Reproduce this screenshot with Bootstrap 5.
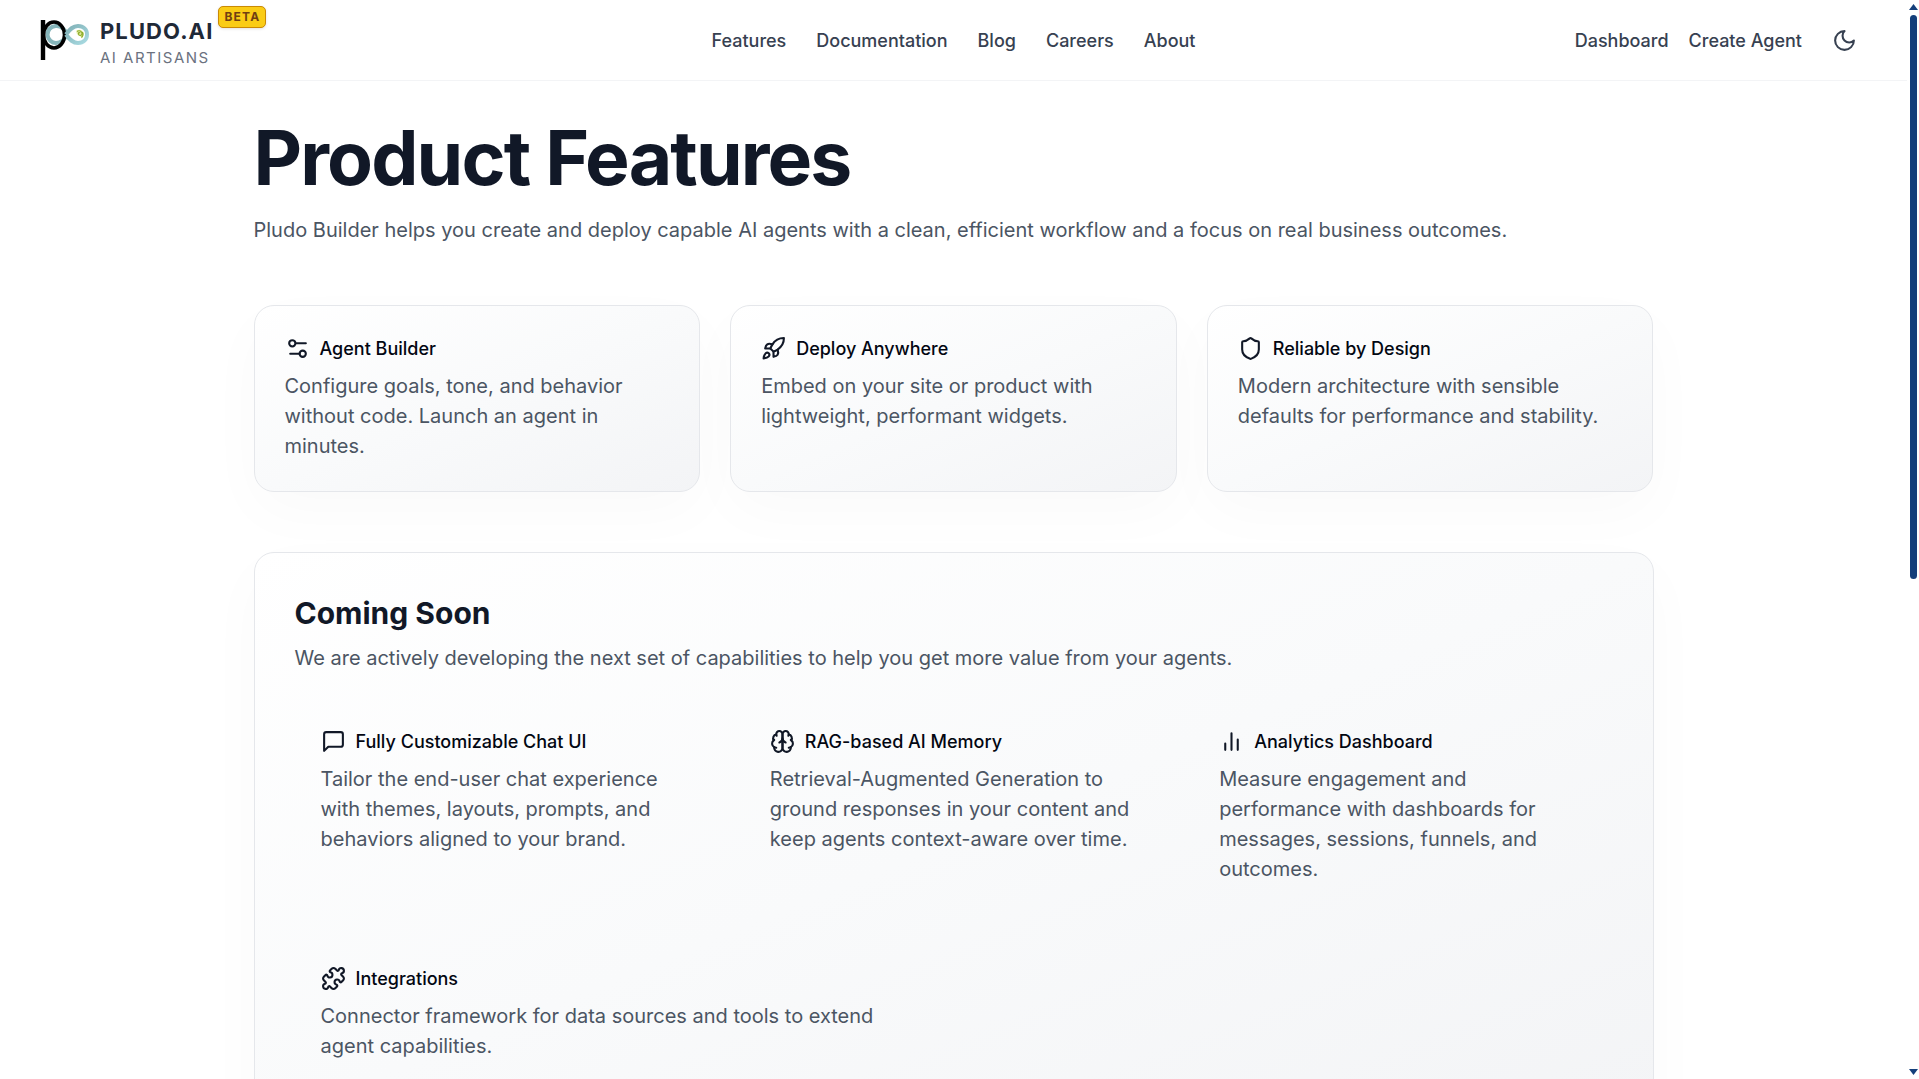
<!DOCTYPE html>
<html lang="en">
<head>
<meta charset="utf-8">
<meta name="viewport" content="width=device-width, initial-scale=1">
<title>Product Features – Pludo.AI</title>
<link href="https://cdn.jsdelivr.net/npm/bootstrap@5.3.0/dist/css/bootstrap.min.css" rel="stylesheet">
<style>
  body { font-family: Inter, "Liberation Sans", sans-serif; font-size: 20px; line-height: 30px; color: #4b5563; background: #fff; }
  .pane { min-width: 0; }
  .topbar { height: 81px; padding: 0 40px; border-bottom: 1px solid #f3f4f6; }
  .side { flex: 1 1 0; }
  .topbar a { text-decoration: none; }
  .menu { gap: 30px; }
  .actions { gap: 20px; }
  .menu a, .actions a { padding-top: 2px; font-size: 18px; font-weight: 500; color: #374151; }
  .moon { width: 45px; height: 45px; color: #374151; }
  .logo { width: 50px; height: 50px; }
  .brand { gap: 10px; position: relative; }
  .wordmark { font-size: 22px; line-height: 28px; font-weight: 700; letter-spacing: .05em; color: #1f2937; }
  .tagline { font-size: 15px; line-height: 25px; letter-spacing: .1em; color: #6b7280; }
  .brand-text { padding-top: 6px; }
  .beta { position: absolute; left: 100%; top: -5px; margin-left: 5px; padding: 0 5px; border: 1px solid #ca8a04; border-radius: 5px; background: #facc15; color: #713f12; font-size: 12px; line-height: 20px; font-weight: 700; letter-spacing: .1em; box-shadow: 0 1px 3px rgba(0,0,0,.12); }
  .wrap { max-width: 1400px; padding-top: 39px; }
  h1 { font-size: 75px; line-height: 75px; font-weight: 700; letter-spacing: -.025em; color: #111827; margin-bottom: 20px; }
  h2 { font-size: 30px; line-height: 40px; font-weight: 700; color: #111827; margin-bottom: 10px; }
  h3 { font-size: 18px; line-height: 25px; font-weight: 500; color: #030712; margin: 0; }
  .intro { margin-bottom: 60px; }
  .coming-text { margin-bottom: 30px; }
  .tiles { display: grid; grid-template-columns: repeat(3, minmax(0, 1fr)); gap: 30px; }
  .surface { border: 1px solid #e5e7eb; border-radius: 20px; background: linear-gradient(to bottom right, #fff, #f9fafb 50%, #f3f4f6); box-shadow: 0 20px 60px rgba(0,0,0,.025); }
  .tile { padding: 30px; }
  .panel { padding: 40px; margin: 60px 0; }
  .upcoming { padding: 26px; }
  .upcoming.wide { grid-column: span 2; max-width: 650px; }
  .head { gap: 10px; margin-bottom: 10px; }
  .ico { width: 25px; height: 25px; flex: none; fill: none; stroke: currentColor; stroke-width: 2; stroke-linecap: round; stroke-linejoin: round; }
  .head .ico { color: #111827; }
  .rail { width: 12px; padding: 4px 0; flex: none; }
  .thumb { width: 7px; height: 52.7%; margin-top: 5px; border-radius: 4px; background: #143f7b; }
  .rail svg { width: 9px; height: 6px; fill: #143f7b; }
</style>
<script src="https://cdn.jsdelivr.net/npm/bootstrap@5.3.0/dist/js/bootstrap.bundle.min.js"></script>
</head>
<body>
<div class="d-flex vh-100 overflow-hidden">
  <div class="pane flex-grow-1 overflow-hidden">
    <header class="topbar d-flex align-items-center">
      <div class="side d-flex">
        <a href="#" class="brand d-flex align-items-center">
          <svg class="logo" viewBox="0 0 50 50" aria-hidden="true">
            <defs><linearGradient id="lg" x1="0" y1="0" x2="1" y2="1"><stop offset="0" stop-color="#7fb0b6"/><stop offset="1" stop-color="#a9dbe2"/></linearGradient></defs>
            <path d="M27 19.500C24 12 20 10.500 15.500 11C9.500 12 7.500 16 7.500 20C8 25 12 28 16 28C22 28 25 24 27 19.500" fill="none" stroke="#86b5ba" stroke-width="4"/>
            <path d="M3 5V45" stroke="#000" stroke-width="4.400"/>
            <ellipse cx="14" cy="20" rx="10.500" ry="13" fill="none" stroke="#000" stroke-width="3.600"/>
            <path d="M26 19.500C30 14 33 11 38 11C43.500 11 47 14.500 47 19.500C47 24.500 43.500 28 38 28C33 28 30 25 26 19.500" fill="none" stroke="url(#lg)" stroke-width="4"/>
            <path d="M36.500 15.500c2-1.500 5.500-1 6.500 1.500s0 5-1.500 6.500c-.5-2-2-3-3.500-3.500-1.500-1-2-3-1.500-4.500z" fill="#e6edaa"/>
            <path d="M37 16.500c2-1.500 5-.5 5 2s-3 2.500-3.500.7 1-2 1.800-1M42.500 17c1 2 .5 4-1 5.500" fill="none" stroke="#8fae2c" stroke-width="1.200"/>
          </svg>
          <span class="brand-text d-flex flex-column">
            <span class="wordmark">PLUDO.AI</span>
            <span class="tagline">AI ARTISANS</span>
          </span>
          <span class="beta">BETA</span>
        </a>
      </div>
      <nav class="menu d-flex" aria-label="Main">
        <a href="#">Features</a><a href="#">Documentation</a><a href="#">Blog</a><a href="#">Careers</a><a href="#">About</a>
      </nav>
      <div class="side actions d-flex align-items-center justify-content-end">
        <a href="#">Dashboard</a><a href="#">Create Agent</a>
        <button type="button" class="moon btn border-0 p-0 d-flex align-items-center justify-content-center" aria-label="Dark mode">
          <svg class="ico" viewBox="0 0 24 24"><path d="M12 3a6 6 0 0 0 9 9 9 9 0 1 1-9-9Z"/></svg>
        </button>
      </div>
    </header>

    <main class="wrap mx-auto">
      <h1>Product Features</h1>
      <p class="intro">Pludo Builder helps you create and deploy capable AI agents with a clean, efficient workflow and a focus on real business outcomes.</p>

      <section class="tiles">
        <article class="tile surface">
          <div class="head d-flex align-items-center">
            <svg class="ico" viewBox="0 0 24 24"><path d="M20 7h-9M14 17H5"/><circle cx="17" cy="17" r="3"/><circle cx="7" cy="7" r="3"/></svg>
            <h3>Agent Builder</h3>
          </div>
          <p class="mb-0">Configure goals, tone, and behavior without code. Launch an agent in minutes.</p>
        </article>
        <article class="tile surface">
          <div class="head d-flex align-items-center">
            <svg class="ico" viewBox="0 0 24 24"><path d="M4.500 16.500c-1.500 1.260-2 5-2 5s3.740-.5 5-2c.71-.84.7-2.130-.09-2.910a2.180 2.180 0 0 0-2.910-.09z"/><path d="m12 15-3-3a22 22 0 0 1 2-3.950A12.880 12.880 0 0 1 22 2c0 2.720-.78 7.500-6 11a22.350 22.350 0 0 1-4 2z"/><path d="M9 12H4s.55-3.030 2-4c1.620-1.080 5 0 5 0"/><path d="M12 15v5s3.030-.55 4-2c1.080-1.620 0-5 0-5"/></svg>
            <h3>Deploy Anywhere</h3>
          </div>
          <p class="mb-0">Embed on your site or product with lightweight, performant widgets.</p>
        </article>
        <article class="tile surface">
          <div class="head d-flex align-items-center">
            <svg class="ico" viewBox="0 0 24 24"><path d="M20 13c0 5-3.500 7.500-7.660 8.950a1 1 0 0 1-.67-.01C7.500 20.500 4 18 4 13V6a1 1 0 0 1 1-1c2 0 4.500-1.200 6.240-2.720a1.170 1.170 0 0 1 1.520 0C14.510 3.810 17 5 19 5a1 1 0 0 1 1 1z"/></svg>
            <h3>Reliable by Design</h3>
          </div>
          <p class="mb-0">Modern architecture with sensible defaults for performance and stability.</p>
        </article>
      </section>

      <section class="panel surface">
        <h2>Coming Soon</h2>
        <p class="coming-text">We are actively developing the next set of capabilities to help you get more value from your agents.</p>
        <div class="tiles">
          <article class="upcoming">
            <div class="head d-flex align-items-center">
              <svg class="ico" viewBox="0 0 24 24"><path d="M21 15a2 2 0 0 1-2 2H7l-4 4V5a2 2 0 0 1 2-2h14a2 2 0 0 1 2 2z"/></svg>
              <h3>Fully Customizable Chat UI</h3>
            </div>
            <p class="mb-0">Tailor the end-user chat experience with themes, layouts, prompts, and behaviors aligned to your brand.</p>
          </article>
          <article class="upcoming">
            <div class="head d-flex align-items-center">
              <svg class="ico" viewBox="0 0 24 24"><path d="M12 5a3 3 0 1 0-5.997.125 4 4 0 0 0-2.526 5.770 4 4 0 0 0 .556 6.588A4 4 0 1 0 12 18Z"/><path d="M12 5a3 3 0 1 1 5.997.125 4 4 0 0 1 2.526 5.770 4 4 0 0 1-.556 6.588A4 4 0 1 1 12 18Z"/><path d="M15 13a4.500 4.500 0 0 1-3-4 4.500 4.500 0 0 1-3 4"/><path d="M17.599 6.500a3 3 0 0 0 .399-1.375M6.003 5.125A3 3 0 0 0 6.401 6.500M3.477 10.896a4 4 0 0 1 .585-.396M19.938 10.500a4 4 0 0 1 .585.396M6 18a4 4 0 0 1-1.967-.516M19.967 17.484A4 4 0 0 1 18 18"/></svg>
              <h3>RAG-based AI Memory</h3>
            </div>
            <p class="mb-0">Retrieval-Augmented Generation to ground responses in your content and keep agents context-aware over time.</p>
          </article>
          <article class="upcoming">
            <div class="head d-flex align-items-center">
              <svg class="ico" viewBox="0 0 24 24"><path d="M18 20V10M12 20V4M6 20v-6"/></svg>
              <h3>Analytics Dashboard</h3>
            </div>
            <p class="mb-0">Measure engagement and performance with dashboards for messages, sessions, funnels, and outcomes.</p>
          </article>
          <article class="upcoming wide">
            <div class="head d-flex align-items-center">
              <svg class="ico" viewBox="0 0 24 24"><path d="M15.390 4.390a1 1 0 0 0 1.680-.474 2.500 2.500 0 1 1 3.014 3.015 1 1 0 0 0-.474 1.680l1.683 1.682a2.414 2.414 0 0 1 0 3.414L19.610 15.390a1 1 0 0 1-1.680-.474 2.500 2.500 0 1 0-3.014 3.015 1 1 0 0 1 .474 1.680l-1.683 1.682a2.414 2.414 0 0 1-3.414 0L8.610 19.610a1 1 0 0 0-1.680.474 2.500 2.500 0 1 1-3.014-3.015 1 1 0 0 0 .474-1.680l-1.683-1.682a2.414 2.414 0 0 1 0-3.414L4.390 8.610a1 1 0 0 1 1.680.474 2.500 2.500 0 1 0 3.014-3.015 1 1 0 0 1-.474-1.680l1.683-1.682a2.414 2.414 0 0 1 3.414 0z"/></svg>
              <h3>Integrations</h3>
            </div>
            <p class="mb-0">Connector framework for data sources and tools to extend agent capabilities.</p>
          </article>
        </div>
      </section>
    </main>
  </div>
  <div class="rail d-flex flex-column align-items-center" aria-hidden="true">
    <svg viewBox="0 0 9 6"><path d="M4.500 0 9 6H0z"/></svg>
    <div class="thumb"></div>
    <svg class="mt-auto" viewBox="0 0 9 6"><path d="M0 0h9L4.500 6z"/></svg>
  </div>
</div>
</body>
</html>
